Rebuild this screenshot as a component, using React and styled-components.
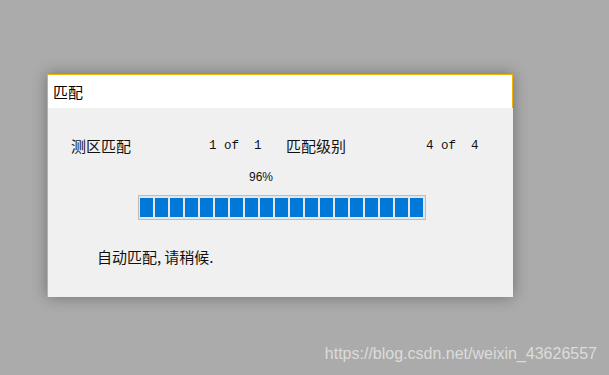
import React from "react";
import styled, { createGlobalStyle } from "styled-components";

const GlobalStyle = createGlobalStyle`
  html, body {
    margin: 0;
    padding: 0;
    background: #ababab;
  }
`;

const Page = styled.div`
  position: relative;
  width: 609px;
  height: 375px;
  padding: 74px 0 0 47px;
  box-sizing: border-box;
  font-family: "Noto Sans CJK SC", "Liberation Sans", sans-serif;
  color: #111;
`;

const Window = styled.div`
  width: 466px;
  height: 223px;
  box-sizing: border-box;
  background: #f0f0f0;
  border-left: 1px solid #f2b308;
  box-shadow: 0 0 14px rgba(0, 0, 0, 0.35);
  display: flex;
  flex-direction: column;
`;

const TitleBar = styled.div`
  height: 34px;
  box-sizing: border-box;
  background: #fff;
  border-top: 1px solid #f2b308;
  border-right: 1px solid #f2b308;
  display: flex;
  align-items: center;
  padding-left: 5px;
  font-size: 15px;
  color: #000;
`;

const Body = styled.div`
  flex: 1;
  display: flex;
  flex-direction: column;
  padding-top: 27px;
`;

const InfoRow = styled.div`
  display: grid;
  grid-template-columns: 138px 77px 140px auto;
  padding-left: 23px;
  height: 20px;
  align-items: center;
  font-size: 15px;
`;

const Count = styled.span`
  font-family: "Liberation Mono", "DejaVu Sans Mono", monospace;
  font-size: 12.5px;
  white-space: pre;
`;

const Percent = styled.div`
  margin: 12px 0 0 201px;
  height: 20px;
  line-height: 20px;
  font-size: 12px;
  font-family: "Liberation Sans", sans-serif;
`;

const Bar = styled.div`
  margin: 8px 0 0 90px;
  width: 288px;
  height: 25px;
  box-sizing: border-box;
  border: 1px solid #bcbcbc;
  background: #e6e6e6;
  display: flex;
  gap: 2px;
  padding: 2px 1px;
`;

const Block = styled.div`
  width: 13px;
  height: 100%;
  background: #0078d7;
`;

const Status = styled.div`
  margin: 27px 0 0 49px;
  height: 20px;
  line-height: 20px;
  font-size: 15px;
`;

const Comma = styled.span`
  margin-right: 3px;
`;

const Watermark = styled.div`
  margin-top: 48px;
  padding-right: 12px;
  text-align: right;
  font-family: "Liberation Sans", sans-serif;
  font-size: 16px;
  color: #dcdcdc;
`;

const blocks = Array.from({ length: 19 });

export default function App() {
  return (
    <>
      <GlobalStyle />
      <Page>
        <Window>
          <TitleBar>匹配</TitleBar>
          <Body>
            <InfoRow>
              <span>测区匹配</span>
              <Count>1 of  1</Count>
              <span>匹配级别</span>
              <Count>4 of  4</Count>
            </InfoRow>
            <Percent>96%</Percent>
            <Bar>
              {blocks.map((_, i) => (
                <Block key={i} />
              ))}
            </Bar>
            <Status>
              自动匹配<Comma>,</Comma>请稍候.
            </Status>
          </Body>
        </Window>
        <Watermark>https://blog.csdn.net/weixin_43626557</Watermark>
      </Page>
    </>
  );
}
